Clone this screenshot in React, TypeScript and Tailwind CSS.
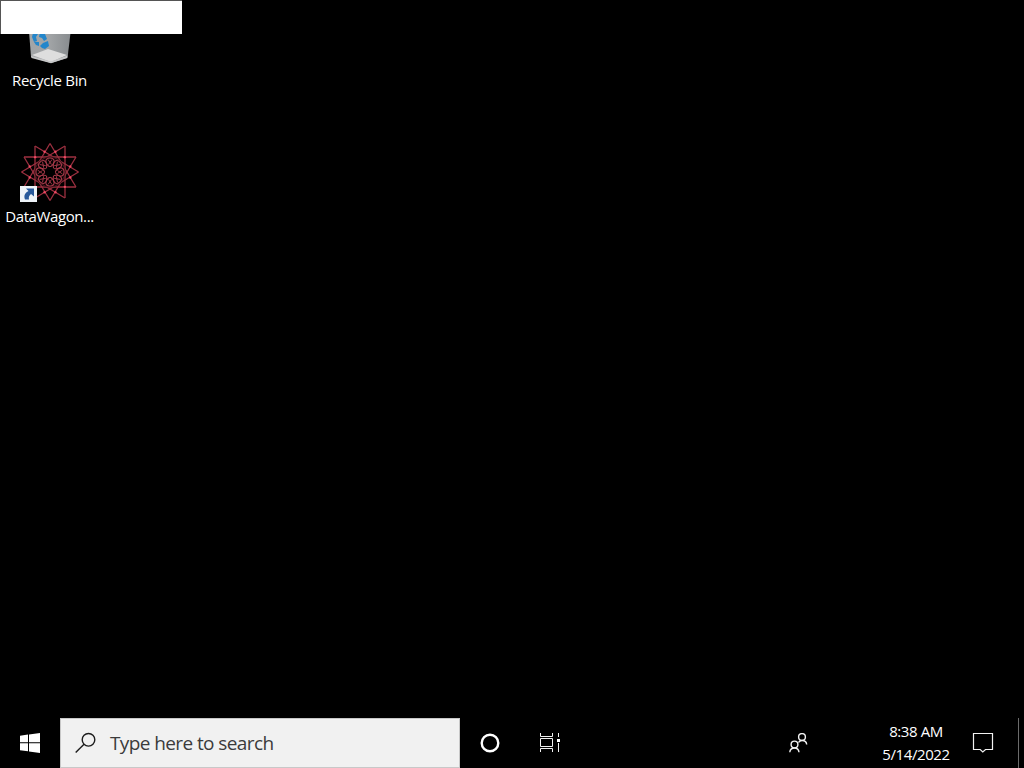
const STAR_POINTS = 12;

const polar = (radius: number, step: number) => {
  const angle = (step * 2 * Math.PI) / STAR_POINTS - Math.PI / 2;
  return [30 + radius * Math.cos(angle), 30 + radius * Math.sin(angle)];
};

// tips on the axes are slightly shorter than the others
const tip = (step: number) => polar(step % 3 === 0 ? 28.5 : 30, step);

const RecycleBin = () => (
  <svg width="60" height="60" viewBox="0 0 60 60">
    <defs>
      <linearGradient id="bin" x1="0" x2="1" y1="0" y2="0">
        <stop offset="0" stopColor="#a2a5a7" />
        <stop offset="0.45" stopColor="#a3a6a8" />
        <stop offset="1" stopColor="#85898c" />
      </linearGradient>
    </defs>
    <path d="M7.500 8 53 8 47.500 54 31 59 11 53Z" fill="url(#bin)" />
    <path d="M12 51 28 45 47 51 31 58Z" fill="#dedede" />
    <path d="M11 52 31 57.500 47.500 51.500 47 54 31 59.300 11.500 54Z" fill="#c6c7c8" />
    <g fill="#2386cb">
      <path d="m13 29 5 1-2 3 1 4-3 1-2-5z" />
      <path d="m20 28 5 2 2 5-3 2-2-3-3-1z" />
      <path d="m14 38 5 0v4l-3-1z" />
      <path d="m20 42 3-3 5-2 1 5-4 3-3-1z" />
    </g>
  </svg>
);

const DataWagon = () => (
  <svg width="60" height="60" viewBox="0 0 60 60" fill="none">
    {Array.from({ length: STAR_POINTS }, (_, i) => {
      const [x1, y1] = tip(i);
      const [x2, y2] = tip(i + 4);
      return <line key={i} x1={x1} y1={y1} x2={x2} y2={y2} stroke="#9c3040" strokeWidth="1.300" />;
    })}
    {Array.from({ length: STAR_POINTS }, (_, i) => {
      const [cx, cy] = polar(21, i + 0.5);
      return <circle key={i} cx={cx} cy={cy} r="1.200" fill="#ee4862" />;
    })}
    <circle cx="30" cy="30" r="15.500" fill="#000" fillOpacity="0.550" />
    {[0, 45, 90, 135, 180, 225, 270, 315].map((angle) => (
      <g key={angle} transform={`rotate(${angle} 30 30)`} stroke="#a83a4a">
        <path d="M30 25C24 21 25 16 30 16S36 21 30 25" strokeWidth="1.100" />
        <path d="M28 17.500 31.500 22.500M32 17.500 28.500 22.500" strokeWidth="0.900" />
      </g>
    ))}
    <circle cx="30" cy="30" r="5" fill="#000" />
    <path d="M0 44h17v16H0z" fill="#eef3f8" />
    <path d="M6 46.500h8v8l-3-2.500c-2 1.500-2.500 3-2 5.500H5c-1.500-4 0-6.500 3.500-8.500z" fill="#28599b" />
  </svg>
);

const WindowsLogo = () => (
  <svg width="20" height="20" viewBox="0 0 20 20" fill="#fff">
    <path d="M0 2.700 8 1.500V9.200H0zM9 1.400 20 0V9.200H9zM0 10.200H8V18.300L0 17.300zM9 10.200H20V20L9 18.500z" />
  </svg>
);

const SearchIcon = () => (
  <svg width="22" height="22" viewBox="0 0 22 22" fill="none" stroke="#1c1c1c" strokeWidth="1.400">
    <circle cx="13.500" cy="7.800" r="6.300" />
    <path d="M9 12.300 .7 20.600" />
  </svg>
);

const Cortana = () => (
  <svg width="20" height="20" viewBox="0 0 20 20" fill="none" stroke="#fff" strokeWidth="2.400">
    <circle cx="10" cy="10" r="8.300" />
  </svg>
);

const TaskView = () => (
  <svg width="20" height="20" viewBox="0 0 20 20" fill="none" stroke="#f2f2f2">
    <path d="M.5 0v3.500h12V0M.5 5.500h12v8H.5zM.5 19v-3.500h12V19M18.500 0v4M18.500 10v9" />
    <path d="M17 6h3v3h-3z" fill="#fff" stroke="none" />
  </svg>
);

const People = () => (
  <svg width="20" height="20" viewBox="0 0 20 20" fill="none" stroke="#f2f2f2" strokeWidth="1.400">
    <circle cx="13" cy="4" r="3.400" />
    <path d="M9.500 9.500C10.300 8 11.500 7.500 13 7.500c2.800 0 4.500 1.500 4.700 4" />
    <circle cx="5.500" cy="11.500" r="3.400" />
    <path d="M.8 19.300c.2-2.800 2-4.300 4.700-4.300s4.200 1.500 4.500 4.300" />
  </svg>
);

const Notifications = () => (
  <svg width="22" height="22" viewBox="0 0 22 22" fill="none" stroke="#f2f2f2" strokeWidth="1.200">
    <path d="M1.500 1.500h19v16h-7L10.800 20 8.200 17.500H1.500z" />
  </svg>
);

const App = () => {
  return (
    <div className="relative flex h-screen w-screen flex-col overflow-hidden bg-black font-['Open_Sans','Noto_Sans',sans-serif] text-white">
      <main className="flex flex-1 flex-col items-start pt-1">
        <div className="flex h-[138px] w-[99px] flex-col items-center">
          <RecycleBin />
          <span className="mt-1.5 text-[15px] leading-5 tracking-[-0.3px] whitespace-nowrap">Recycle Bin</span>
        </div>
        <div className="flex w-[99px] flex-col items-center">
          <DataWagon />
          <span className="mt-1 text-[15px] leading-5 tracking-[-0.4px] whitespace-nowrap">DataWagon...</span>
        </div>
      </main>
      <div className="absolute top-0 left-0 h-[34px] w-[182px] border-t border-l border-[#555] bg-white" />
      <footer className="flex h-[50px] shrink-0 items-center">
        <button className="flex w-[60px] justify-center">
          <WindowsLogo />
        </button>
        <div className="flex h-full w-[400px] items-center border border-[#c8c8c8] bg-[#f1f1f1] pl-[14px] text-[#3b3b3b]">
          <SearchIcon />
          <span className="ml-[13px] text-[19px] tracking-[-0.6px] whitespace-nowrap">Type here to search</span>
        </div>
        <button className="flex w-[60px] justify-center">
          <Cortana />
        </button>
        <button className="flex w-[60px] justify-center">
          <TaskView />
        </button>
        <button className="ml-[189px] flex w-[60px] justify-center">
          <People />
        </button>
        <div className="ml-[37px] w-[100px] text-center text-[15px] leading-[23px] tracking-[-0.4px]">
          <div>8:38 AM</div>
          <div>5/14/2022</div>
        </div>
        <button className="flex w-[34px] justify-center">
          <Notifications />
        </button>
        <div className="ml-auto h-full w-[6px] border-l border-[#6b6b6b]" />
      </footer>
    </div>
  );
};

export default App;
